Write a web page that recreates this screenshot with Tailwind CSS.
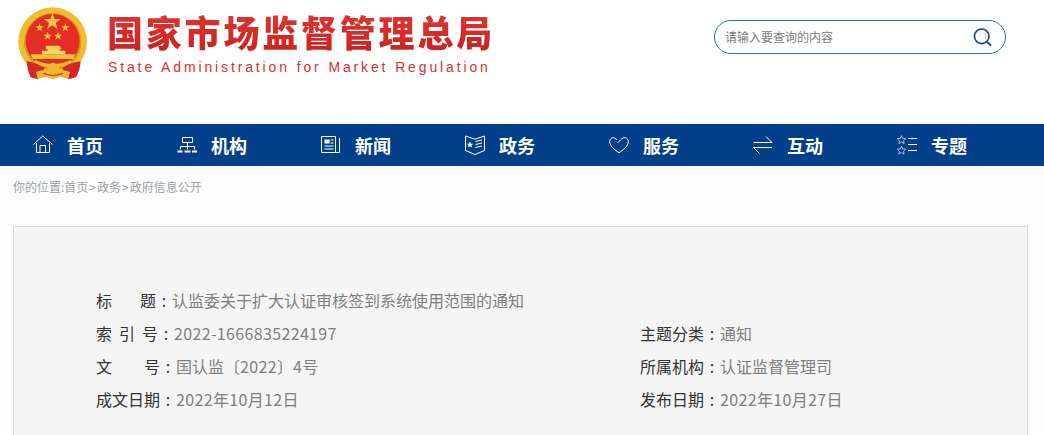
<!DOCTYPE html>
<html lang="zh-CN">
<head>
  <meta charset="utf-8">
  <title>国家市场监督管理总局</title>
  <script src="https://cdn.jsdelivr.net/npm/@tailwindcss/browser@4"></script>
</head>
<body class="h-[435px] overflow-hidden bg-[#fdfdfd] font-['Noto_Sans_CJK_SC',sans-serif]">

<header class="flex h-[124px] bg-white">
  <svg class="ml-[17px] mt-[6px] h-[76px] w-[72px]" viewBox="51 18 216 228">
    <circle cx="158" cy="125" r="103" fill="#efbd2f"/>
    <circle cx="158" cy="125" r="86" fill="#d99a1f"/>
    <circle cx="158" cy="123" r="81" fill="#e52d27"/>
    <path d="M157 38l6 19h20l-16 12 6 19-16-12-16 12 6-19-16-12h20z" fill="#f3c945"/>
    <path d="M119 70l3 9h9l-7 6 3 9-8-5.500-8 5.500 3-9-7-6h9z" fill="#efc23e"/>
    <path d="M196 70l3 9h9l-7 6 3 9-8-5.500-8 5.500 3-9-7-6h9z" fill="#efc23e"/>
    <path d="M143 95l3 9h9l-7 6 3 9-8-5.500-8 5.500 3-9-7-6h9z" fill="#efc23e"/>
    <path d="M174 95l3 9h9l-7 6 3 9-8-5.500-8 5.500 3-9-7-6h9z" fill="#efc23e"/>
    <path d="M138 137h40l7 11h-6v4h18l-2 11h-68l-2-11h18v-4h-6z" fill="#f6d566"/>
    <path d="M92 163h134l-6 14H98z" fill="#f0c23a"/>
    <path d="M80 184l30 6q12 10 24 14l-20 34-22-6q-10-20-12-48z" fill="#d3272a"/>
    <path d="M242 184l-32 6q-12 10-24 14l20 34 22-6q12-20 14-48z" fill="#d3272a"/>
    <path d="M106 180q52 24 106 0l4 8q-56 28-114 0z" fill="#efbd2f"/>
    <path d="M108 216q18-8 30-4q8-24 21-24t21 24q12-4 30 4l-5 20-26-6-20 8-20-8-26 6z" fill="#eeb72c"/>
    <path d="M130 220q29 12 58 0" fill="none" stroke="#c9452a" stroke-width="4"/>
  </svg>
  <div class="ml-[18px] flex flex-col">
    <h1 class="mt-[6px] bg-linear-to-b from-[#e03a36] to-[#c81f1e] bg-clip-text text-[36px] leading-[50px] font-black tracking-[2.8px] whitespace-nowrap text-transparent">国家市场监督管理总局</h1>
    <p class="ml-px mt-[3px] font-['Liberation_Sans',sans-serif] text-[14px] leading-[16px] tracking-[2.87px] whitespace-nowrap text-[#d9302b]">State Administration for Market Regulation</p>
  </div>
  <div class="absolute left-[714px] top-[20px] flex h-[34px] w-[292px] items-center justify-between rounded-full border border-[#1c78c4] bg-white pl-[10px] pr-[12px]">
    <span class="text-[12px] text-[#7d7d7d]">请输入要查询的内容</span>
    <svg class="mt-[2px] h-[20px] w-[20px]" viewBox="0 0 20 20" fill="none">
      <circle cx="8.700" cy="8.300" r="7.300" stroke="#1a4a8c" stroke-width="1.700"/>
      <path d="M13.800 13.800l4.200 3.700" stroke="#1a4a8c" stroke-width="2"/>
      <path d="M12 5.500a5 5 0 0 1 .5 5" stroke="#8fb0d6" stroke-width="1"/>
    </svg>
  </div>
</header>

<nav class="flex h-[42px] items-center bg-[#043f8b] pl-[33px] text-[18px] font-bold text-white">
  <a class="flex w-[144px] items-center gap-[14px]">
    <svg class="h-[20px] w-[20px]" viewBox="0 0 20 20" fill="none" stroke="#fff"><path d="M.5 9.500 9.700 1 19.500 9.500M3.500 8v9.500h13V8M7 17.500v-7h5.500v7"/></svg>
    <span>首页</span>
  </a>
  <a class="flex w-[144px] items-center gap-[14px]">
    <svg class="h-[20px] w-[20px]" viewBox="0 0 20 20" fill="none" stroke="#fff"><path d="M5.500 2.500h10v5h-10zM10.500 7.500v4M3.500 11.500h14M3.500 11.500v3M10.500 11.500v3M17.500 11.500v3"/><path d="M.5 15.500h5v2h-5zM7.500 15.500h6v2h-6zM15 15.500h5v2h-5z" fill="#fff" stroke="none"/></svg>
    <span>机构</span>
  </a>
  <a class="flex w-[144px] items-center gap-[14px]">
    <svg class="h-[20px] w-[20px]" viewBox="0 0 20 20" fill="none" stroke="#fff"><path d="M.5 1.500h14v16H.5zM18.500 3v14.500h-4"/><path d="M3.500 4.500h5v4h-5z" fill="#fff" stroke="none"/><path d="M9.500 5h3M9.500 8h3M3.500 11h9M3.500 14h9"/></svg>
    <span>新闻</span>
  </a>
  <a class="flex w-[144px] items-center gap-[14px]">
    <svg class="h-[20px] w-[20px]" viewBox="0 0 20 20" fill="none" stroke="#fff"><path d="M.5 1 10 4.200 19.500 1v14.500L10 19.500.5 15.500z"/><path d="M5 6.500l1 2.200h2.200l-1.700 1.500.6 2.300-2.100-1.300-2.100 1.300.6-2.300L1.800 8.700H4z" fill="#fff" stroke="none"/><path d="M10.500 6.500l6.500-1.500M10.500 9.500l6.500-1.500M10.500 12.500l6.500-1.500"/></svg>
    <span>政务</span>
  </a>
  <a class="flex w-[144px] items-center gap-[14px]">
    <svg class="h-[20px] w-[20px]" viewBox="0 0 20 20" fill="none" stroke="#fff"><path d="M8 4.800 5.800 3.200C3.500 1.800.7 3.800.7 6.800c0 4.200 5 8 9.300 11 4.300-3 9.300-6.800 9.300-11 0-3-2.800-5-5.300-3.800-1.500.7-3.500 3-5.500 5"/></svg>
    <span>服务</span>
  </a>
  <a class="flex w-[144px] items-center gap-[14px]">
    <svg class="h-[20px] w-[20px]" viewBox="0 0 20 20" fill="none" stroke="#fff"><path d="M.5 7.500h18.500L13 1.500M19 12.500H.5l6 6"/></svg>
    <span>互动</span>
  </a>
  <a class="flex items-center gap-[14px]">
    <svg class="h-[20px] w-[20px]" viewBox="0 0 20 20" fill="none" stroke="#fff"><path d="M4.500.7l1.200 2.700 3 .3-2.200 2 .6 2.900-2.600-1.500-2.600 1.500.6-2.900-2.200-2 3-.3zM4.500 11.200l1.200 2.700 3 .3-2.200 2 .6 2.900-2.600-1.500-2.600 1.500.6-2.900-2.200-2 3-.3z" stroke="#a9bdd8"/><path d="M11 3.500h9M11 9.500h9M11 15.500h9"/></svg>
    <span>专题</span>
  </a>
</nav>

<div class="flex h-[60px] items-start pl-[13px] pt-[12px] text-[12px] leading-[18px] text-[#9ba3a8]">
  <a>你的位置:首页</a><span class="mx-px">&gt;</span><a>政务</a><span class="mx-px">&gt;</span><a>政府信息公开</a>
</div>

<main class="mx-[13px] h-[209px] w-[1015px] border border-b-0 border-[#d3dcee] bg-[#f5f5f5] pl-[82px] pt-[57px] text-[16px] leading-[33px] text-[#7f7f7f]">
  <div class="flex">
    <span class="flex w-[60px] justify-between text-[#333]"><span>标</span><span>题</span></span>
    <span class="w-[16px] text-center text-[#333]">:</span>
    <span>认监委关于扩大认证审核签到系统使用范围的通知</span>
  </div>
  <div class="grid grid-cols-[544px_1fr]">
    <div class="flex">
      <span class="flex w-[62px] justify-between text-[#333]"><span>索</span><span>引</span><span>号</span></span>
      <span class="w-[16px] text-center text-[#333]">:</span>
      <span class="tracking-[0.35px]">2022-1666835224197</span>
    </div>
    <div class="flex">
      <span class="w-[64px] text-[#333]">主题分类</span>
      <span class="w-[16px] text-center text-[#333]">:</span>
      <span>通知</span>
    </div>
    <div class="flex">
      <span class="flex w-[64px] justify-between text-[#333]"><span>文</span><span>号</span></span>
      <span class="w-[16px] text-center text-[#333]">:</span>
      <span>国认监〔<span class="tracking-[0.35px]">2022</span>〕<span class="tracking-[0.35px]">4</span>号</span>
    </div>
    <div class="flex">
      <span class="w-[64px] text-[#333]">所属机构</span>
      <span class="w-[16px] text-center text-[#333]">:</span>
      <span>认证监督管理司</span>
    </div>
    <div class="flex">
      <span class="w-[64px] text-[#333]">成文日期</span>
      <span class="w-[16px] text-center text-[#333]">:</span>
      <span class="tracking-[0.35px]">2022年10月12日</span>
    </div>
    <div class="flex">
      <span class="w-[64px] text-[#333]">发布日期</span>
      <span class="w-[16px] text-center text-[#333]">:</span>
      <span class="tracking-[0.35px]">2022年10月27日</span>
    </div>
  </div>
</main>

</body>
</html>
